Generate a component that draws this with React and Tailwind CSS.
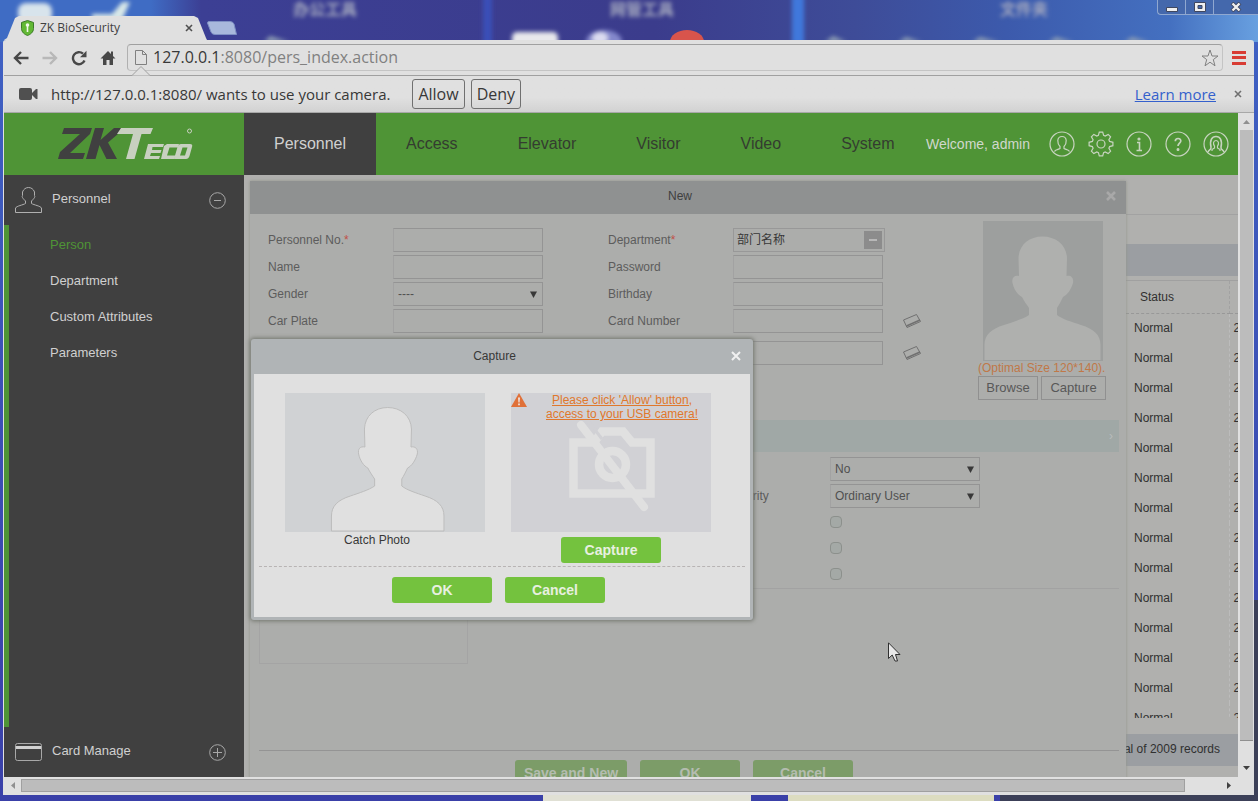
import React from "react";

const ARIAL = "font-['Liberation_Sans',Arial,'Noto_Sans_CJK_SC',sans-serif]";
const SEGOE = "font-['Open_Sans','Noto_Sans',sans-serif]";

const PERSON =
  "M59.5 15.5C46 15.5 36 24 35.5 37L36 55C31 54 28.500 57 29.500 62C31 69 35 74 39 76C41 80 44 84 46 87L46 94C40 98 30 101 21 104C8 108 1.500 114 1.500 124L1.500 139L117.500 139L117.500 124C117.500 114 111 108 98 104C89 101 79 98 74 94L74 87C76 84 78 80 80 76C84 74 88 69 90 62C91 57 88 54 83.500 55L84 37C83.500 24 73 15.500 59.500 15.500Z";

function Wallpaper() {
  return (
    <svg className="absolute inset-0 h-full w-full" viewBox="0 0 1258 801" preserveAspectRatio="none" aria-hidden="true">
      <defs>
        <linearGradient id="sky" x1="0" x2="1" y1="0" y2="0">
          <stop offset="0" stopColor="#3f6cc4" />
          <stop offset="0.12" stopColor="#3f6cc4" />
          <stop offset="0.16" stopColor="#3c3f94" />
          <stop offset="0.52" stopColor="#3b3c8c" />
          <stop offset="0.68" stopColor="#3e4c98" />
          <stop offset="0.8" stopColor="#3c5aac" />
          <stop offset="0.93" stopColor="#4470c0" />
          <stop offset="1" stopColor="#68a0e0" />
        </linearGradient>
        <linearGradient id="edge" x1="0" x2="0" y1="0" y2="1">
          <stop offset="0" stopColor="#3f62c4" />
          <stop offset="1" stopColor="#3a40a8" />
        </linearGradient>
        <filter id="soft" x="-30%" y="-60%" width="160%" height="220%">
          <feGaussianBlur stdDeviation="2" />
        </filter>
      </defs>
      <rect width="1258" height="801" fill="url(#edge)" />
      <rect width="1258" height="42" fill="url(#sky)" />
      <g filter="url(#soft)">
        <rect x="483" y="-4" width="9" height="48" fill="#3a50b8" />
        <rect x="792" y="-4" width="12" height="48" fill="#3f78dc" />
        <rect x="18" y="3" width="34" height="20" rx="8" fill="#d8e4ec" />
        <path d="M92 14h20l10-12h8l-8 18H92z" fill="#d8e8e8" />
        <rect x="512" y="32" width="46" height="16" rx="5" fill="#e8e8ec" />
        <ellipse cx="604" cy="42" rx="18" ry="12" fill="#8488cc" />
        <ellipse cx="600" cy="38" rx="8" ry="6" fill="#dcdcf0" />
        <path d="M264 42l6-6 20 6zM825 42l8-6 14 6zM898 42l8-5 16 5zM972 42l8-5 20 5zM1048 42l8-5 18 5zM1124 42l8-5 18 5z" fill="#8f9fb4" />
      </g>
      <ellipse cx="687" cy="42" rx="17" ry="12" fill="#d8544c" />
      <g filter="url(#soft)" fill="#a6aac0" fontSize="16" fontFamily="Noto Sans CJK SC" fontWeight="700">
        <text x="293" y="15">办公工具</text>
        <text x="610" y="15">网管工具</text>
        <text x="1000" y="15">文件夹</text>
      </g>
      <rect x="1000" y="790" width="258" height="11" fill="#3c4058" />
      <rect x="1254" y="600" width="4" height="201" fill="#3c4058" />
      <rect x="543" y="790" width="208" height="11" fill="#e0e0d4" />
      <rect x="788" y="790" width="206" height="11" fill="#dcdcc0" />
    </svg>
  );
}

function TitleBar() {
  return (
    <header className="relative flex h-10 shrink-0 items-end">
      <div className="relative ml-1 flex h-6 w-[203px] items-center bg-[#e0e0e0] pr-[12px] pl-[17px] [clip-path:polygon(0_100%,3px_92%,11px_8%,15px_0,190px_0,194px_8%,202px_92%,100%_100%)]">
        <svg width="13" height="16" viewBox="0 0 13 16" aria-hidden="true">
          <path d="M6.500 .500L12.500 2.500V8.500C12.500 12 9.500 14.500 6.500 15.500C3.500 14.500 .500 12 .500 8.500V2.500Z" fill="#62b834" stroke="#3c7c28" />
          <circle cx="6.500" cy="5" r="1.800" fill="#f0f8e8" />
          <path d="M5.700 6h1.600v6H5.700z" fill="#f0f8e8" />
        </svg>
        <span className="ml-[6px] flex-1 text-xs leading-4 text-[#404040]">ZK BioSecurity</span>
        <button aria-label="Close tab" className="grid size-3 place-items-center">
          <svg width="8" height="8" viewBox="0 0 8 8" stroke="#505050" strokeWidth="1.600"><path d="M1 1l6 6M7 1l-6 6" /></svg>
        </button>
      </div>
      <button aria-label="New tab" className="mb-[5px] h-[14px] w-[30px]">
        <svg width="30" height="14" viewBox="0 0 30 14"><path d="M2 .500H23Q26 .500 27 3L29.500 13.500H8Q5 13.500 4 11L.500 2Q.500 .500 2 .500Z" fill="#a8b8dc" stroke="#7f90c4" /></svg>
      </button>
      <div className="ml-auto flex h-[15px] w-[101px] self-start rounded-bl border-b border-l border-[#90a8d0] bg-[#4468ac]">
        <button aria-label="Minimise" className="grid w-7 place-items-center border-r border-[#90a8d0]"><svg width="12" height="9" viewBox="0 0 12 9"><path d="M.500 4.500h11v4H.500z" fill="#f0f0f0" stroke="#404860" /></svg></button>
        <button aria-label="Maximise" className="grid w-7 place-items-center border-r border-[#90a8d0]"><svg width="12" height="10" viewBox="0 0 12 10"><path d="M.500 .500h11v9H.500zM4 3.500v3h4v-3z" fill="#f0f0f0" fillRule="evenodd" stroke="#404860" /></svg></button>
        <button aria-label="Close" className="grid flex-1 place-items-center"><svg width="12" height="10" viewBox="0 0 12 10"><path d="M2 1l8 8M10 1l-8 8" stroke="#404860" strokeWidth="4" /><path d="M2.500 1.500l7 7M9.500 1.500l-7 7" stroke="#f0f0f0" strokeWidth="2.400" /></svg></button>
      </div>
    </header>
  );
}

function Toolbar() {
  return (
    <div className="relative flex h-9 shrink-0 items-center border-b border-[#a0a0a0] pr-2 pl-[7px]">
      <button aria-label="Back" className="grid size-5 place-items-center">
        <svg width="16" height="14" viewBox="0 0 16 14" fill="none" stroke="#484848" strokeWidth="2.400"><path d="M15.500 7H2M8 1L2 7l6 6" /></svg>
      </button>
      <button aria-label="Forward" className="ml-[9px] grid size-5 place-items-center">
        <svg width="16" height="14" viewBox="0 0 16 14" fill="none" stroke="#b8b8b8" strokeWidth="2.400"><path d="M.500 7H14M8 1l6 6-6 6" /></svg>
      </button>
      <button aria-label="Reload" className="ml-[9px] grid size-5 place-items-center">
        <svg width="16" height="16" viewBox="0 0 16 16"><path d="M13.500 10.500A6 6 0 1 1 12 3.700" fill="none" stroke="#484848" strokeWidth="2.400" /><path d="M15.500 .800V7.200H9z" fill="#484848" /></svg>
      </button>
      <button aria-label="Home" className="ml-[9px] grid size-5 place-items-center">
        <svg width="16" height="16" viewBox="0 0 16 16" fill="#484848"><path d="M8 1L.500 8.500H3V15H6.500V10H9.500V15H13V8.500H15.500L13 6V1.500H11V4Z" /></svg>
      </button>
      <div className="ml-[9px] flex h-[27px] flex-1 items-center rounded-sm border border-[#c4c4c4] border-t-[#a0a0a0] border-l-[#b0b0b0] pr-[3px] pl-[7px]">
        <svg width="12" height="15" viewBox="0 0 12 15" fill="none" stroke="#808080"><path d="M.500 .500H7.500L11.500 4.500V14.500H.500ZM7.500 .500V4.500H11.500" /></svg>
        <div className="ml-[6px] flex-1 pb-[2px] text-base leading-5 text-[#808080]" role="textbox" aria-label="Address">
          <span className="text-[#383838]">127.0.0.1</span>:8080/pers_index.action
        </div>
        <button aria-label="Bookmark">
          <svg width="18" height="18" viewBox="0 0 18 18" fill="none" stroke="#808080"><path d="M9 1L11 7H17L12.300 10.600L14 16.800L9 13.200L4 16.800L5.700 10.600L1 7H7Z" /></svg>
        </button>
      </div>
      <button aria-label="Menu" className="ml-[9px] grid size-[14px] content-between">
        <span className="h-[3px] bg-[#d83c34]" /><span className="h-[3px] bg-[#d83c34]" /><span className="h-[3px] bg-[#d83c34]" />
      </button>
      <svg className="absolute -bottom-px left-[128px]" width="18" height="10" viewBox="0 0 18 10"><path d="M0 9.500L9 .500L18 9.500" fill="#e0e0e0" stroke="#a0a0a0" /></svg>
    </div>
  );
}

function InfoBar() {
  const btn = "h-[30px] rounded-[3px] border border-[#707070] px-[5px] text-base leading-5";
  return (
    <div className="flex h-[37px] shrink-0 items-center border-b border-[#a8a8a8] bg-linear-to-b from-[#e0e0e0] from-60% to-[#d2d2d2] pr-[12px] pl-[15px] text-[15px] text-[#383838]">
      <svg width="19" height="12" viewBox="0 0 19 12" fill="#505050"><rect width="13" height="12" rx="2" /><path d="M13 5L17 1H18.500V11H17L13 7Z" /></svg>
      <p className="ml-[13px] leading-5 whitespace-nowrap">http://127.0.0.1:8080/ wants to use your camera.</p>
      <button className={btn + " ml-[22px]"}>Allow</button>
      <button className={btn + " ml-[6px]"}>Deny</button>
      <a href="#learn" className="ml-auto leading-5 text-[#3460cc] underline">Learn more</a>
      <button aria-label="Dismiss" className="ml-[18px]"><svg width="8" height="8" viewBox="0 0 8 8" stroke="#707070" strokeWidth="1.600"><path d="M1 1l6 6M7 1l-6 6" /></svg></button>
    </div>
  );
}

function Logo() {
  return (
    <svg width="136" height="36" viewBox="0 0 136 36" role="img" aria-label="ZKTeco">
      <g fill="#404040">
        <path d="M6 2H34L32 8L12 27H27L25 33H0L2 26L22 8H4Z" />
        <path d="M37 2H46L42.500 14L56 2H67L50 16.500L59 33H48.500L41.500 19L37.500 33H28Z" />
      </g>
      <g fill="#c8d0c0">
        <path d="M63 2H95L92.500 8H83.500L76.500 33H68L75 8H59Z" />
        <path d="M90 18H106L105 21H94.500L94 24H103.500L102.500 27H93L92 30H102L101 33H86Z" />
        <path d="M109 18H121L120 21.500H111.500L109 29.500H117.500L116.500 33H103L106 20Z" />
        <path fillRule="evenodd" d="M123 18H132Q135 18 134 21L131.500 30Q130.500 33 128 33H116L119.500 21Q120.500 18 123 18ZM124.500 21.500L122 29.500H127L129.500 21.500Z" />
      </g>
      <g stroke="#c8d0c0" fill="none"><circle cx="131.500" cy="5" r="2" /></g>
    </svg>
  );
}

function RoundIcon({ label, children }) {
  return (
    <button aria-label={label} className="size-[26px]">
      <svg width="26" height="26" viewBox="0 0 26 26" fill="none" stroke="#c8d4c0" strokeWidth="1.200">{children}</svg>
    </button>
  );
}

const PERSON_SMALL = "M5.500 20.500C6 18.500 9.500 18.500 11 17.500V15.500C9 13.500 8.700 11.500 8.800 9.500C9 7 10.700 5.500 13 5.500S17 7 17.200 9.500C17.300 11.500 17 13.500 15 15.500V17.500C16.500 18.500 20 18.500 20.500 20.500";

function gearPath() {
  let d = "";
  for (let i = 0; i < 8; i++) {
    const pts = [[9, -17], [12, -8], [12, 8], [9, 17]];
    pts.forEach(([r, a], j) => {
      const t = ((i * 45 + a) * Math.PI) / 180;
      d += (i === 0 && j === 0 ? "M" : "L") + (13 + r * Math.cos(t)).toFixed(1) + " " + (13 + r * Math.sin(t)).toFixed(1);
    });
  }
  return d + "Z";
}

function AppHeader() {
  const items = ["Access", "Elevator", "Visitor", "Video", "System"];
  return (
    <div className="flex h-[62px] shrink-0 items-stretch bg-[#4f9436]">
      <a href="#home" className="flex w-60 shrink-0 items-center justify-center pl-[3px]"><Logo /></a>
      <nav className="flex text-base text-[#343c30]">
        <a href="#personnel" className="flex items-center bg-[#404040] px-[30px] text-[#d0d0d0]">Personnel</a>
        {items.map((n) => <a key={n} href={"#" + n} className="flex items-center px-[30px]">{n}</a>)}
      </nav>
      <div className="ml-auto flex items-center pr-[9px]">
        <span className="mr-[19px] text-sm whitespace-nowrap text-[#d0d8cc]">Welcome, admin</span>
        <div className="flex w-[180px] justify-between">
          <RoundIcon label="Profile"><circle cx="13" cy="13" r="12" /><path d={PERSON_SMALL} /></RoundIcon>
          <RoundIcon label="Settings"><path d={gearPath()} /><circle cx="13" cy="13" r="4" /></RoundIcon>
          <RoundIcon label="About"><circle cx="13" cy="13" r="12" /><circle cx="13" cy="8" r="1" fill="#c8d4c0" /><path d="M11 11.500H13.500V19M10.500 19.500H16" strokeWidth="1.600" /></RoundIcon>
          <RoundIcon label="Help"><circle cx="13" cy="13" r="12" /><path d="M10.300 10.200C10.300 6.500 16 6.700 15.800 10C15.700 12 13 12.300 13 15" strokeWidth="1.700" /><circle cx="13" cy="18.500" r=".9" fill="#c8d4c0" /></RoundIcon>
          <RoundIcon label="Log out"><circle cx="13" cy="13" r="12" /><path d="M5 21C6 18.500 8.500 19 8 16C6.500 9 9 5.500 13 5.500S19.500 9 18 16C17.500 19 20 18.500 21 21" strokeWidth="1.600" /><path d="M9 20V18.500L11.500 17V15C10 13 10 9.500 13 9.500S16 13 14.500 15V17L17 18.500V20" /></RoundIcon>
        </div>
      </div>
    </div>
  );
}

function Sidebar() {
  const items = ["Person", "Department", "Custom Attributes", "Parameters"];
  return (
    <aside className="flex w-60 shrink-0 flex-col bg-[#404040] text-[13px] text-[#d0d0d0]">
      <button className="flex h-[50px] items-center pr-[18px] pl-[11px] text-left">
        <svg width="27" height="26" viewBox="0 0 27 26" fill="none" stroke="#b0b0b0"><path d="M.500 25.500V21C1.500 19 8 18 10.500 16.500V14C8 11.500 6.500 10 7.500 8.500V5C8.500 2 11 .500 13.500 .500S18.500 2 19.500 5V8.500C20.500 10 19 11.500 16.500 14V16.500C19 18 25.500 19 26.500 21V25.500Z" /></svg>
        <span className="ml-[10px] flex-1 pb-[3px]">Personnel</span>
        <svg width="17" height="17" viewBox="0 0 17 17" fill="none" stroke="#a8a8a8"><circle cx="8.500" cy="8.500" r="7.800" /><path d="M5 8.500H12" /></svg>
      </button>
      <ul className="flex-1 border-l-[5px] border-[#4f9436] pt-[2px]">
        {items.map((n, i) => (
          <li key={n}><a href={"#" + n} className={"flex h-9 items-center pl-[41px] " + (i === 0 ? "text-[#4f9436]" : "")}>{n}</a></li>
        ))}
      </ul>
      <button className="flex h-[50px] items-center pr-[18px] pl-[11px] text-left">
        <svg width="27" height="18" viewBox="0 0 27 18" fill="none" stroke="#a8a8a8"><rect x=".5" y=".5" width="26" height="17" rx="2" /><path d="M1 4.500H26" stroke="#d0d0d0" strokeWidth="3" /></svg>
        <span className="ml-[10px] flex-1 pb-[3px]">Card Manage</span>
        <svg width="17" height="17" viewBox="0 0 17 17" fill="none" stroke="#a8a8a8"><circle cx="8.500" cy="8.500" r="7.800" /><path d="M4 8.500H13M8.500 4V13" /></svg>
      </button>
    </aside>
  );
}

function RecordList() {
  return (
    <section className="ml-2 flex h-full flex-col text-xs text-[#303030]">
      <div className="h-10 border-b border-[#a2a2a2]" />
      <div className="h-[29px]" />
      <div className="h-8 shrink-0 bg-[#9b9ea2]" />
      <div className="mt-1 flex-1 overflow-hidden border-t border-[#a0a0a0]">
        <table className="ml-auto w-28 table-fixed border-collapse text-left">
          <colgroup><col className="w-[103px]" /><col className="w-[9px]" /></colgroup>
          <thead>
            <tr className="h-8"><th className="border-r border-b border-dashed border-r-[#a2a2a2] border-b-[#989898] pl-[14px] font-normal">Status</th><th aria-label="Updated" className="border-b border-dashed border-[#989898]" /></tr>
          </thead>
          <tbody>
            {Array.from({ length: 14 }, (_, i) => (
              <tr key={i} className="h-[30px]"><td className="border-r border-dashed border-[#bcbcbc] pl-2">Normal</td><td className="overflow-hidden pl-1">2</td></tr>
            ))}
          </tbody>
        </table>
      </div>
      <div className="mt-4 flex h-8 shrink-0 items-center justify-end bg-[#9b9ea2] pr-[18px] pb-[2px]">Total of 2009 records</div>
      <div className="h-[11px] shrink-0" />
    </section>
  );
}

const FIELD = "h-6 w-[150px] border border-[#949494] border-l-[#a2a2a2] bg-transparent px-1 text-xs text-[#505050] outline-none";

function SelectField({ id, value, label }) {
  return (
    <div className="relative w-[150px]">
      <select id={id} aria-label={label} className={FIELD + " block appearance-none"} defaultValue={value}><option>{value}</option></select>
      <svg className="pointer-events-none absolute top-[9px] right-[6px]" width="7" height="7" viewBox="0 0 7 7"><path d="M0 .500H7L3.500 7Z" fill="#383838" /></svg>
    </div>
  );
}

function CardIcon() {
  return (
    <svg width="20" height="18" viewBox="0 0 20 18" fill="none" stroke="#707070"><path d="M1.500 8L14.500 2.500L18.500 9.500L5 15.500Z" strokeLinejoin="round" /><path d="M4.500 14L18 8" strokeWidth="1.500" /></svg>
  );
}

function FieldRow({ left, right }) {
  return (
    <>
      <label htmlFor={left.id}>{left.text}{left.req && <span className="text-[#c05048]">*</span>}</label>
      <div>{left.control}</div>
      <label htmlFor={right.id}>{right.text}{right.req && <span className="text-[#c05048]">*</span>}</label>
      <div>{right.control}</div>
      <div>{right.icon}</div>
    </>
  );
}

function NewDialog() {
  const btn = "h-[26px] rounded-[3px] bg-[#7c9c68] text-sm font-bold text-[#b4bcb0]";
  const small = "h-6 border border-[#909090] pb-px text-[13px] text-[#585858]";
  return (
    <div role="dialog" aria-label="New" className="absolute top-1.5 right-28 -bottom-4 left-1.5 flex flex-col bg-[#acadab] text-xs text-[#5c5c5c] shadow-[0_0_3px_#909488]">
      <div className="flex h-[33px] shrink-0 items-center bg-[#8f9191] pr-[10px]">
        <h2 className="flex-1 pr-2 pb-[3px] pl-3 text-center text-[#404040]">New</h2>
        <button aria-label="Close" className="pb-[3px]"><svg width="10" height="10" viewBox="0 0 10 10" stroke="#a8a8a8" strokeWidth="2.600"><path d="M1 1l8 8M9 1l-8 8" /></svg></button>
      </div>
      <div className="flex h-[206px] shrink-0 justify-between pr-5 pl-[18px]">
        <div className="grid grid-cols-[125px_215px_125px_169px_20px] grid-rows-[27px_27px_27px_27px_38px] content-start items-center pt-[12px]">
          <FieldRow left={{ id: "no", text: "Personnel No.", req: true, control: <input id="no" className={FIELD + " block"} /> }}
            right={{ id: "dept", text: "Department", req: true, control: (
              <div className="flex h-6 w-[152px] items-center border border-[#989898] pr-[2px]">
                <input id="dept" defaultValue="部门名称" className="w-0 flex-1 bg-transparent px-[3px] text-xs text-[#383838] outline-none" />
                <button aria-label="Pick department" className="grid size-[18px] place-items-center bg-[#8c8c8c]"><span className="h-[2px] w-2 bg-[#b8b8b8]" /></button>
              </div>) }} />
          <FieldRow left={{ id: "name", text: "Name", control: <input id="name" className={FIELD + " block"} /> }}
            right={{ id: "pwd", text: "Password", control: <input id="pwd" className={FIELD + " block"} /> }} />
          <FieldRow left={{ id: "gender", text: "Gender", control: <SelectField id="gender" value="----" /> }}
            right={{ id: "birth", text: "Birthday", control: <input id="birth" className={FIELD + " block"} /> }} />
          <FieldRow left={{ id: "plate", text: "Car Plate", control: <input id="plate" className={FIELD + " block"} /> }}
            right={{ id: "card", text: "Card Number", control: <input id="card" className={FIELD + " block"} />, icon: <CardIcon /> }} />
          <span /><span /><span />
          <input aria-label="Secondary card" className={FIELD + " block"} />
          <CardIcon />
        </div>
        <div className="flex w-32 flex-col pt-[7px]">
          <svg className="ml-[5px] bg-[#9d9f9e]" width="120" height="140" viewBox="0 0 120 140"><path d={PERSON} fill="#afb0ae" /></svg>
          <span className="-mt-px h-4 leading-4 whitespace-nowrap text-[#c07848]">(Optimal Size 120*140).</span>
          <div className="flex gap-[3px]">
            <button className={small + " w-[60px]"}>Browse</button>
            <button className={small + " w-[65px]"}>Capture</button>
          </div>
        </div>
      </div>
      <div className="mr-[7px] ml-[9px] flex h-8 shrink-0 items-center justify-end bg-[#a0a8a6] pr-[6px] text-[#b8bcbc]">›</div>
      <div className="mr-[7px] ml-[9px] grid shrink-0 grid-cols-[367px_204px_1fr] grid-rows-[27px_27px_26px_26px_26px] items-center border-b border-[#a2a2a2] pt-[3px] pb-px">
        <span /><span /><SelectField label="Superuser" value="No" />
        <span /><label htmlFor="auth">Device Operation Authority</label><SelectField id="auth" value="Ordinary User" />
        {["Delayed passage", "Disabled", "Set valid time"].map((n) => (
          <React.Fragment key={n}>
            <span /><span />
            <input type="checkbox" aria-label={n} className="size-3 appearance-none rounded-sm border border-[#8c908c] bg-[#a4a9a6]" />
          </React.Fragment>
        ))}
      </div>
      <div className="mt-1 ml-[9px] h-[71px] w-[209px] border border-[#a4a4a4]" />
      <div className="mt-auto mr-[7px] ml-[9px] flex justify-center gap-[13px] border-t border-[#949494] pt-[9px] pr-[10px] pb-[7px]">
        <button className={btn + " w-28"}>Save and New</button>
        <button className={btn + " w-[100px]"}>OK</button>
        <button className={btn + " w-[100px]"}>Cancel</button>
      </div>
    </div>
  );
}

function CaptureDialog() {
  const btn = "h-[26px] w-[100px] rounded-[3px] bg-[#74c23e] text-sm font-bold text-[#e8f0e0]";
  return (
    <div role="dialog" aria-label="Capture" className="absolute top-[164px] left-[7px] w-[502px] rounded-[3px] bg-[#b0b4b6] px-[3px] pb-[3px] text-xs text-[#383838] shadow-[0_0_4px_1px_#70746c]">
      <div className="flex h-[35px] items-center pr-[9px] pb-[2px]">
        <h2 className="flex-1 pl-1 text-center">Capture</h2>
        <button aria-label="Close"><svg width="10" height="10" viewBox="0 0 10 10" stroke="#f0f0f0" strokeWidth="2"><path d="M1 1l8 8M9 1l-8 8" /></svg></button>
      </div>
      <div className="bg-[#e0e0e0] px-[5px] pt-[19px] pb-[14px]">
        <div className="flex gap-[26px] border-b border-dashed border-[#b8b4b4] pb-[3px] pl-[26px]">
          <figure className="w-[200px]">
            <svg className="bg-[#d0d2d4]" width="200" height="139" viewBox="0 0 200 139"><path d={PERSON} transform="translate(45 -1) scale(.97 1)" fill="#e0e0e0" stroke="#bcbcbc" /></svg>
            <figcaption className="pr-4 text-center leading-4">Catch Photo</figcaption>
          </figure>
          <div className="w-[200px]">
            <div className="relative h-[139px] bg-[#d1d1d5]">
              <svg className="absolute inset-0" width="200" height="139" viewBox="0 0 200 139">
                <g fill="none" stroke="#e0e0e0" strokeWidth="8.500">
                  <path d="M62.500 49.500H83L91 38.500H112L121 49.500H139.500V100.500H62.500Z" />
                  <circle cx="101.500" cy="71.500" r="13.500" />
                  <path d="M78 29L91 46" stroke="#d1d1d5" strokeWidth="3" />
                  <path d="M70 32L133 114" strokeLinecap="round" strokeWidth="8" />
                </g>
                <path d="M8 0L16 14H0Z" fill="#e07038" />
                <path d="M7 4.500H9L8.600 9.500H7.400ZM7.100 10.500H8.900V12.300H7.100Z" fill="#f0e0d8" />
              </svg>
              <p className="relative pl-[22px] text-center leading-[14px] text-[#e0782c] underline">Please click 'Allow' button,<br />access to your USB camera!</p>
            </div>
            <div className="flex justify-center pt-[5px]"><button className={btn}>Capture</button></div>
          </div>
        </div>
        <div className="flex justify-center gap-[13px] pt-[10px] pr-[7px]">
          <button className={btn}>OK</button>
          <button className={btn}>Cancel</button>
        </div>
      </div>
    </div>
  );
}

function VerticalScroll() {
  return (
    <div className="flex w-4 shrink-0 flex-col items-center bg-[#e0e0e0]" aria-hidden="true">
      <div className="grid h-[17px] place-items-center"><svg width="7" height="4" viewBox="0 0 7 4"><path d="M0 4L3.500 0L7 4Z" fill="#909090" /></svg></div>
      <div className="w-[13px] flex-1 border-b border-[#909090] bg-[#bcbcbc]" />
      <div className="grid h-[36px] items-end pb-[7px]"><svg width="7" height="4" viewBox="0 0 7 4"><path d="M0 0L3.500 4L7 0Z" fill="#404040" /></svg></div>
    </div>
  );
}

function HorizontalScroll() {
  return (
    <div className="flex h-[18px] shrink-0 items-center bg-[#e0e0e0] pb-px" aria-hidden="true">
      <div className="grid w-[17px] place-items-center"><svg width="4" height="7" viewBox="0 0 4 7"><path d="M4 0L0 3.500L4 7Z" fill="#909090" /></svg></div>
      <div className="h-[13px] flex-1 border border-[#a0a0a0] bg-[#bcbcbc]" />
      <div className="flex w-[69px] justify-end pr-[23px]"><svg width="4" height="7" viewBox="0 0 4 7"><path d="M0 0L4 3.500L0 7Z" fill="#404040" /></svg></div>
    </div>
  );
}

export default function App() {
  return (
    <div className={"relative flex h-screen flex-col overflow-hidden bg-[#3a40a8] pb-[6px] " + SEGOE}>
      <Wallpaper />
      <TitleBar />
      <div className="relative mr-1 ml-[3px] flex min-h-0 flex-1 flex-col rounded-t-[3px] border-l border-[#e0e0e0] bg-[#e0e0e0]">
        <Toolbar />
        <InfoBar />
        <div className={"flex min-h-0 flex-1 " + ARIAL}>
          <div className="flex min-w-0 flex-1 flex-col overflow-hidden">
            <AppHeader />
            <div className="flex min-h-0 flex-1">
              <Sidebar />
              <main className="relative min-w-0 flex-1 overflow-hidden bg-[#b0b0ae]">
                <RecordList />
                <NewDialog />
                <CaptureDialog />
              </main>
            </div>
          </div>
          <VerticalScroll />
        </div>
        <HorizontalScroll />
      </div>
      <svg className="pointer-events-none absolute top-[642px] left-[888px]" width="13" height="20" viewBox="0 0 13 20" aria-hidden="true"><path d="M.500 .800V16.500L4.200 13L7 19H9.500L7.500 12.500H12Z" fill="#e8e8e8" stroke="#303030" /></svg>
    </div>
  );
}
